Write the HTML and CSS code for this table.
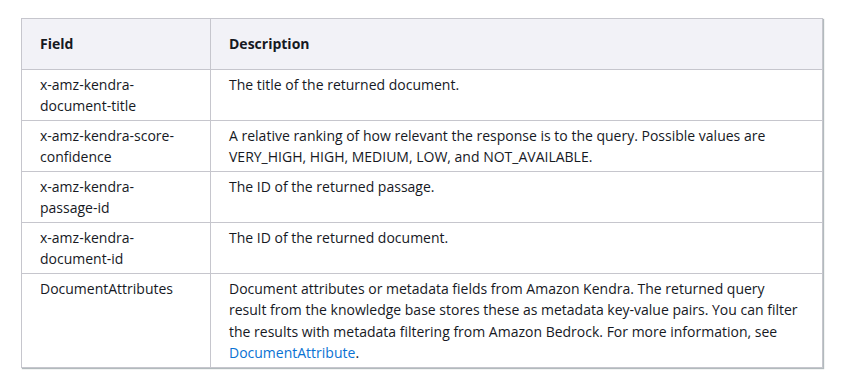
FILE: index.html
```html
<!DOCTYPE html>
<html lang="en">
<head>
  <meta charset="UTF-8" />
  <title>Response fields</title>
  <link rel="stylesheet" href="styles.css">
</head>
<body>
  <table class="fields">
    <colgroup>
      <col class="col-field">
      <col class="col-desc">
    </colgroup>
    <thead>
      <tr>
        <th>Field</th>
        <th>Description</th>
      </tr>
    </thead>
    <tbody>
      <tr>
        <td>x-amz-kendra-document-title</td>
        <td>The title of the returned document.</td>
      </tr>
      <tr>
        <td>x-amz-kendra-score-confidence</td>
        <td>A relative ranking of how relevant the response is to the query. Possible values are VERY_HIGH, HIGH, MEDIUM, LOW, and NOT_AVAILABLE.</td>
      </tr>
      <tr>
        <td>x-amz-kendra-passage-id</td>
        <td>The ID of the returned passage.</td>
      </tr>
      <tr>
        <td>x-amz-kendra-document-id</td>
        <td>The ID of the returned document.</td>
      </tr>
      <tr>
        <td>DocumentAttributes</td>
        <td>Document attributes or metadata fields from Amazon Kendra. The returned query result from the knowledge base stores these as metadata key-value pairs. You can filter the results with metadata filtering from Amazon Bedrock. For more information, see <a href="#">DocumentAttribute</a>.</td>
      </tr>
    </tbody>
  </table>
</body>
</html>
```

FILE: styles.css
```css
body {
  margin: 0;
  padding: 18px 21px;
  background: #ffffff;
  font-family: "Open Sans", "Noto Sans", sans-serif;
  font-size: 14px;
  line-height: 21.5px;
  color: #16191f;
}

.fields {
  width: 802px;
  border-collapse: collapse;
  table-layout: fixed;
  box-shadow: 1px 1px 1px rgba(0, 28, 36, 0.3);
}

.col-field {
  width: 189px;
}

.fields th,
.fields td {
  border: 1px solid #c6c6cd;
  text-align: left;
  vertical-align: top;
}

.fields th {
  background: #f2f2f7;
  font-weight: 700;
  padding: 14px 18px 14px;
}

.fields td {
  padding: 4px 18px 3px;
  word-wrap: break-word;
}

.fields td:first-child {
  padding-right: 28px;
}

.fields a {
  color: #0972d3;
  text-decoration: none;
}
```
